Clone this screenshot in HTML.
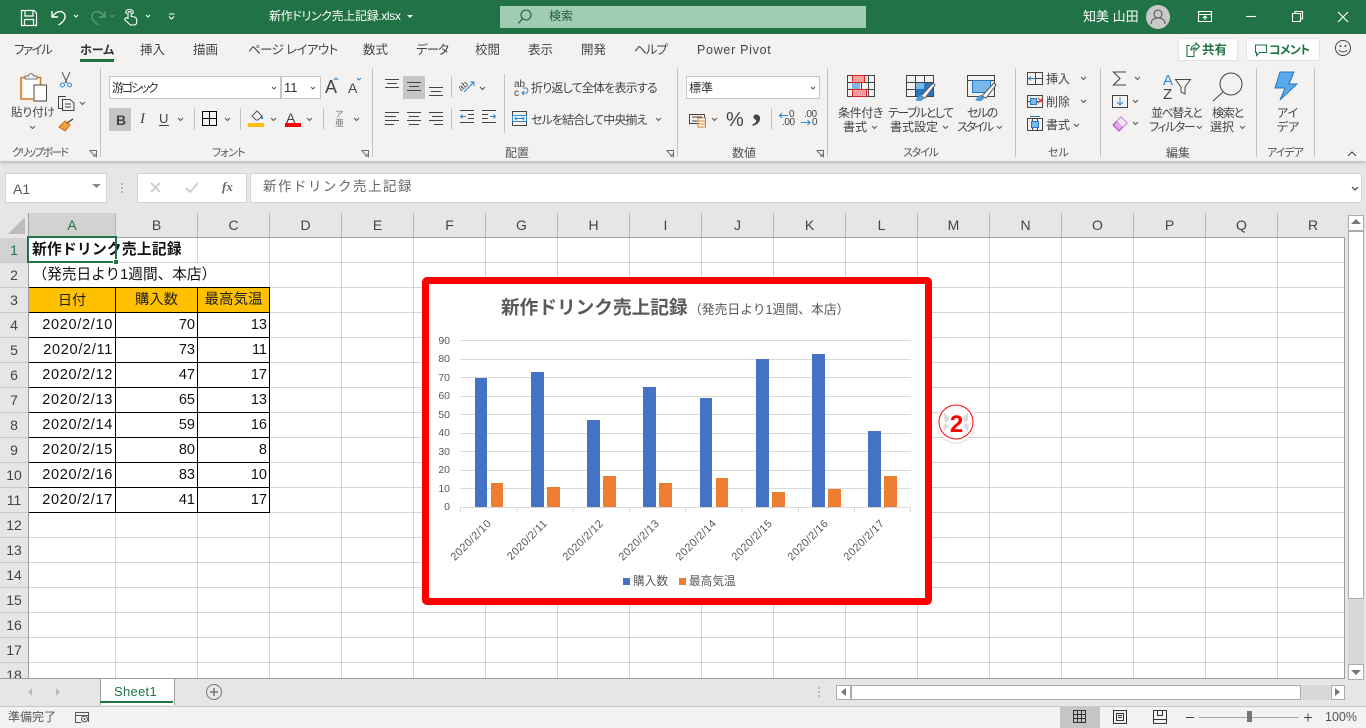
<!DOCTYPE html>
<html lang="ja"><head><meta charset="utf-8"><title>Excel</title>
<style>
html,body{margin:0;padding:0;width:1366px;height:728px;overflow:hidden;background:#e6e6e6}
body{position:relative;font-family:"Liberation Sans","Noto Sans CJK JP",sans-serif;color:#333}
.t{position:absolute;white-space:nowrap;line-height:1;margin-top:1px}
.b{position:absolute}
.p,.r,.g,.tab{font-feature-settings:"palt"}
.r{font-size:12px;color:#444}
.g{font-size:11px;color:#555}
.tab{font-size:12.5px;top:43px;color:#444}
.hd{position:absolute;top:213px;height:24px;line-height:25px;text-align:center;font-size:14px;color:#444}
.rh{position:absolute;left:0;width:28px;height:25px;line-height:26px;text-align:center;font-size:14px;color:#444}
.c{position:absolute;height:25px;line-height:26px;font-size:14.5px;color:#111;white-space:nowrap}
.j{font-size:14.67px;letter-spacing:.33px}
.n{text-align:right}
svg{position:absolute;left:0;top:0;overflow:visible}
</style></head><body>
<!-- title bar -->
<div class="b" style="left:0;top:0;width:1366px;height:34px;background:#217346"></div>
<div class="b" style="left:500px;top:6px;width:366px;height:22px;background:#a0ccb4"></div>
<div class="t p" style="left:269px;top:9px;font-size:12px;color:#fff;letter-spacing:-.35px">新作ドリンク売上記録.xlsx</div>
<div class="t" style="left:549px;top:9px;font-size:12px;color:#1d5c3b">検索</div>
<div class="t" style="left:1083px;top:9px;font-size:13px;color:#fff">知美 山田</div>
<!-- ribbon -->
<div class="b" style="left:0;top:34px;width:1366px;height:127px;background:#f3f2f1;box-shadow:0 2px 3px rgba(0,0,0,.18)"></div>
<div class="t tab" style="left:14px;letter-spacing:-1.5px">ファイル</div>
<div class="t tab" style="left:80px;font-weight:700;color:#333;font-size:12px">ホーム</div>
<div class="b" style="left:80px;top:59px;width:34px;height:3px;background:#217346"></div>
<div class="t tab" style="left:140px">挿入</div>
<div class="t tab" style="left:193px">描画</div>
<div class="t tab" style="left:248px;letter-spacing:-.6px">ページ レイアウト</div>
<div class="t tab" style="left:363px">数式</div>
<div class="t tab" style="left:416px;letter-spacing:-1px">データ</div>
<div class="t tab" style="left:475px">校閲</div>
<div class="t tab" style="left:528px">表示</div>
<div class="t tab" style="left:581px">開発</div>
<div class="t tab" style="left:634px;letter-spacing:-1px">ヘルプ</div>
<div class="t tab" style="left:697px;letter-spacing:.7px;font-size:12.5px">Power Pivot</div>
<!-- share/comment -->
<div class="b" style="left:1178px;top:38px;width:58px;height:21px;background:#fff;border:1px solid #e3e3e3;border-radius:2px"></div>
<div class="b" style="left:1246px;top:38px;width:72px;height:21px;background:#fff;border:1px solid #e3e3e3;border-radius:2px"></div>
<div class="t" style="left:1202px;top:43px;font-size:12.5px;font-weight:700;color:#217346">共有</div>
<div class="t p" style="left:1269px;top:43px;font-size:12px;font-weight:700;color:#217346;letter-spacing:-.8px">コメント</div>
<!-- font boxes -->
<div class="b" style="left:109px;top:76px;width:170px;height:21px;background:#fff;border:1px solid #c6c6c6"></div>
<div class="b" style="left:281px;top:76px;width:38px;height:21px;background:#fff;border:1px solid #c6c6c6"></div>
<div class="b" style="left:686px;top:76px;width:132px;height:21px;background:#fff;border:1px solid #c6c6c6"></div>
<div class="b" style="left:109px;top:108px;width:22px;height:23px;background:#c6c5c4"></div>
<div class="b" style="left:403px;top:76px;width:22px;height:23px;background:#c6c5c4"></div>
<div class="t p" style="left:112px;top:81px;font-size:12px;color:#333;letter-spacing:-2px">游ゴシック</div>
<div class="t" style="left:284px;top:80px;font-size:13px;color:#333">11</div>
<div class="t" style="left:689px;top:81px;font-size:12px;color:#333">標準</div>
<div class="t" style="left:116px;top:112px;font-size:14px;font-weight:700;color:#444">B</div>
<div class="t" style="left:140px;top:111px;font-size:15px;font-style:italic;font-family:'Liberation Serif',serif;color:#444">I</div>
<div class="t" style="left:159px;top:111px;font-size:13px;color:#444">U</div>
<div class="t" style="left:325px;top:77px;font-size:18px;color:#444">A</div>
<div class="t" style="left:348px;top:80px;font-size:14px;color:#444">A</div>
<div class="t" style="left:286px;top:110px;font-size:14px;color:#444">A</div>
<div class="t" style="left:335px;top:109px;font-size:8.5px;color:#777">ア</div>
<div class="t" style="left:335px;top:118px;font-size:9px;color:#777">亜</div>
<div class="t r" style="left:11px;top:107px;font-size:11.5px">貼り付け</div>
<div class="t r" style="left:531px;top:81px;font-size:12px;letter-spacing:-.8px">折り返して全体を表示する</div>
<div class="t r" style="left:531px;top:113px;font-size:12px;letter-spacing:-.9px">セルを結合して中央揃え</div>
<div class="t" style="left:726px;top:109px;font-size:20px;color:#444">%</div>
<div class="t" style="left:752px;top:88px;font-size:38px;font-weight:700;font-family:'Liberation Serif',serif;color:#444">,</div>
<div class="t" style="left:789px;top:109px;font-size:10px;color:#444">0</div>
<div class="t" style="left:782px;top:117px;font-size:10px;color:#444;letter-spacing:-.4px">.00</div>
<div class="t" style="left:804px;top:109px;font-size:10px;color:#444;letter-spacing:-.4px">.00</div>
<div class="t" style="left:812px;top:117px;font-size:10px;color:#444">0</div>
<div class="t r" style="left:838px;top:106px;letter-spacing:-.4px">条件付き</div>
<div class="t r" style="left:843px;top:120px">書式</div>
<div class="t r" style="left:888px;top:106px;letter-spacing:-1.5px">テーブルとして</div>
<div class="t r" style="left:890px;top:120px">書式設定</div>
<div class="t r" style="left:967px;top:106px;letter-spacing:-1.5px">セルの</div>
<div class="t r" style="left:957px;top:120px;letter-spacing:-2px">スタイル</div>
<div class="t r" style="left:1046px;top:72px">挿入</div>
<div class="t r" style="left:1046px;top:95px">削除</div>
<div class="t r" style="left:1046px;top:118px">書式</div>
<div class="t r" style="left:1151px;top:106px;letter-spacing:-1.5px">並べ替えと</div>
<div class="t r" style="left:1149px;top:120px;letter-spacing:-1.5px">フィルター</div>
<div class="t r" style="left:1212px;top:106px;letter-spacing:-1.2px">検索と</div>
<div class="t r" style="left:1210px;top:120px">選択</div>
<div class="t r" style="left:1277px;top:106px">アイ</div>
<div class="t r" style="left:1277px;top:120px">デア</div>
<div class="t g" style="left:12px;top:147px;letter-spacing:-1.8px">クリップボード</div>
<div class="t g" style="left:212px;top:147px;letter-spacing:-.8px">フォント</div>
<div class="t g" style="left:505px;top:146px;font-size:12px">配置</div>
<div class="t g" style="left:732px;top:146px;font-size:12px">数値</div>
<div class="t g" style="left:903px;top:147px;letter-spacing:-1.2px">スタイル</div>
<div class="t g" style="left:1048px;top:147px">セル</div>
<div class="t g" style="left:1166px;top:146px;font-size:12px">編集</div>
<div class="t g" style="left:1267px;top:147px;letter-spacing:-1px">アイデア</div>
<!-- formula bar -->
<div class="b" style="left:5px;top:173px;width:100px;height:28px;background:#fff;border:1px solid #d4d4d4"></div>
<div class="b" style="left:137px;top:173px;width:108px;height:28px;background:#fff;border:1px solid #d4d4d4"></div>
<div class="b" style="left:250px;top:173px;width:1110px;height:28px;background:#fff;border:1px solid #d4d4d4"></div>
<div class="t" style="left:13px;top:181px;font-size:14px;color:#555">A1</div>
<div class="t" style="left:222px;top:179px;font-size:13px;font-style:italic;font-weight:700;font-family:'Liberation Serif',serif;color:#666">fx</div>
<div class="t" style="left:263px;top:179px;font-size:13.5px;letter-spacing:1.5px;color:#666">新作ドリンク売上記録</div>
<!-- sheet -->
<div class="b" style="left:28px;top:237px;width:1316px;height:441px;background:#fff"></div>
<div class="b" style="left:28px;top:213px;width:87px;height:24px;background:#d2d2d2"></div>
<div class="b" style="left:0;top:238px;width:28px;height:24px;background:#d2d2d2"></div>
<div class="b" style="left:29px;top:288px;width:241px;height:24px;background:#ffc000"></div>
<svg width="1366" height="728" style="left:0;top:0">
<path fill="none" stroke="#d4d4d4" stroke-width="1" d="M115.5 237V678M197.5 237V678M269.5 237V678M341.5 237V678M413.5 237V678M485.5 237V678M557.5 237V678M629.5 237V678M701.5 237V678M773.5 237V678M845.5 237V678M917.5 237V678M989.5 237V678M1061.5 237V678M1133.5 237V678M1205.5 237V678M1277.5 237V678
M28 262.5H1344M28 287.5H1344M28 312.5H1344M28 337.5H1344M28 362.5H1344M28 387.5H1344M28 412.5H1344M28 437.5H1344M28 462.5H1344M28 487.5H1344M28 512.5H1344M28 537.5H1344M28 562.5H1344M28 587.5H1344M28 612.5H1344M28 637.5H1344M28 662.5H1344"/>
<path fill="none" stroke="#fff" stroke-width="1" d="M115.5 263V287M197.5 263V287"/>
<path fill="none" stroke="#b4b4b4" stroke-width="1" d="M115.5 213V237M197.5 213V237M269.5 213V237M341.5 213V237M413.5 213V237M485.5 213V237M557.5 213V237M629.5 213V237M701.5 213V237M773.5 213V237M845.5 213V237M917.5 213V237M989.5 213V237M1061.5 213V237M1133.5 213V237M1205.5 213V237M1277.5 213V237"/>
<path fill="none" stroke="#9e9e9e" stroke-width="1" d="M28.5 213V678M28 237.5H1344M1344.5 237V678"/>
<path fill="none" stroke="#c8c8c8" stroke-width="1" d="M0 262.5H28M0 287.5H28M0 312.5H28M0 337.5H28M0 362.5H28M0 387.5H28M0 412.5H28M0 437.5H28M0 462.5H28M0 487.5H28M0 512.5H28M0 537.5H28M0 562.5H28M0 587.5H28M0 612.5H28M0 637.5H28M0 662.5H28"/>
<path fill="#bdbdbd" d="M8 234L25 217V234Z"/>
<path fill="none" stroke="#000" stroke-width="1" d="M29 287.5H270M29 312.5H270M29 337.5H270M29 362.5H270M29 387.5H270M29 412.5H270M29 437.5H270M29 462.5H270M29 487.5H270M29 512.5H270M115.5 287V513M197.5 287V513M269.5 287V513"/>
</svg>
<div class="hd" style="left:29px;width:86px;color:#217346">A</div>
<div class="hd" style="left:116px;width:81px">B</div>
<div class="hd" style="left:198px;width:71px">C</div>
<div class="hd" style="left:270px;width:71px">D</div>
<div class="hd" style="left:342px;width:71px">E</div>
<div class="hd" style="left:414px;width:71px">F</div>
<div class="hd" style="left:486px;width:71px">G</div>
<div class="hd" style="left:558px;width:71px">H</div>
<div class="hd" style="left:630px;width:71px">I</div>
<div class="hd" style="left:702px;width:71px">J</div>
<div class="hd" style="left:774px;width:71px">K</div>
<div class="hd" style="left:846px;width:71px">L</div>
<div class="hd" style="left:918px;width:71px">M</div>
<div class="hd" style="left:990px;width:71px">N</div>
<div class="hd" style="left:1062px;width:71px">O</div>
<div class="hd" style="left:1134px;width:71px">P</div>
<div class="hd" style="left:1206px;width:71px">Q</div>
<div class="hd" style="left:1278px;width:70px">R</div>
<div class="rh" style="top:237px;color:#217346">1</div><div class="rh" style="top:262px">2</div><div class="rh" style="top:287px">3</div><div class="rh" style="top:312px">4</div><div class="rh" style="top:337px">5</div><div class="rh" style="top:362px">6</div><div class="rh" style="top:387px">7</div><div class="rh" style="top:412px">8</div><div class="rh" style="top:437px">9</div><div class="rh" style="top:462px">10</div><div class="rh" style="top:487px">11</div><div class="rh" style="top:512px">12</div><div class="rh" style="top:537px">13</div><div class="rh" style="top:562px">14</div><div class="rh" style="top:587px">15</div><div class="rh" style="top:612px">16</div><div class="rh" style="top:637px">17</div><div class="rh" style="top:662px;height:16px;overflow:hidden">18</div>
<!-- cells -->
<div class="c j" style="left:32px;top:237px;font-weight:700">新作ドリンク売上記録</div>
<div class="c j" style="left:32.500px;top:262px;letter-spacing:0">（発売日より1週間、本店）</div>
<div class="c" style="left:29px;top:287px;width:86px;text-align:center;color:#222;font-size:14px">日付</div>
<div class="c" style="left:116px;top:287px;width:81px;text-align:center;color:#222;font-size:14.3px">購入数</div>
<div class="c" style="left:198px;top:287px;width:71px;text-align:center;color:#222;font-size:14.5px">最高気温</div>
<div class="c n" style="left:29px;top:312px;width:84px;letter-spacing:.7px">2020/2/10</div><div class="c n" style="left:116px;top:312px;width:79px">70</div><div class="c n" style="left:198px;top:312px;width:69px">13</div>
<div class="c n" style="left:29px;top:337px;width:84px;letter-spacing:.7px">2020/2/11</div><div class="c n" style="left:116px;top:337px;width:79px">73</div><div class="c n" style="left:198px;top:337px;width:69px">11</div>
<div class="c n" style="left:29px;top:362px;width:84px;letter-spacing:.7px">2020/2/12</div><div class="c n" style="left:116px;top:362px;width:79px">47</div><div class="c n" style="left:198px;top:362px;width:69px">17</div>
<div class="c n" style="left:29px;top:387px;width:84px;letter-spacing:.7px">2020/2/13</div><div class="c n" style="left:116px;top:387px;width:79px">65</div><div class="c n" style="left:198px;top:387px;width:69px">13</div>
<div class="c n" style="left:29px;top:412px;width:84px;letter-spacing:.7px">2020/2/14</div><div class="c n" style="left:116px;top:412px;width:79px">59</div><div class="c n" style="left:198px;top:412px;width:69px">16</div>
<div class="c n" style="left:29px;top:437px;width:84px;letter-spacing:.7px">2020/2/15</div><div class="c n" style="left:116px;top:437px;width:79px">80</div><div class="c n" style="left:198px;top:437px;width:69px">8</div>
<div class="c n" style="left:29px;top:462px;width:84px;letter-spacing:.7px">2020/2/16</div><div class="c n" style="left:116px;top:462px;width:79px">83</div><div class="c n" style="left:198px;top:462px;width:69px">10</div>
<div class="c n" style="left:29px;top:487px;width:84px;letter-spacing:.7px">2020/2/17</div><div class="c n" style="left:116px;top:487px;width:79px">41</div><div class="c n" style="left:198px;top:487px;width:69px">17</div>
<!-- selection -->
<div class="b" style="left:27px;top:236px;border:2px solid #217346;width:86px;height:23px"></div>
<div class="b" style="left:113px;top:259px;width:4px;height:4px;background:#217346;border:1px solid #fff"></div>
<!-- chart -->
<div class="b" style="left:422px;top:277px;width:496px;height:314px;border:7px solid #f00;border-radius:5px;background:#fff"></div>
<div class="t" style="left:501px;top:298px;font-size:18.67px;font-weight:700;color:#595959">新作ドリンク売上記録</div>
<div class="t" style="left:689px;top:303px;font-size:12.8px;color:#595959">（発売日より1週間、本店）</div>
<svg width="1366" height="728">
<path fill="none" stroke="#d9d9d9" d="M460 340.5H911M460 359.5H911M460 377.5H911M460 396.5H911M460 414.5H911M460 433.5H911M460 451.5H911M460 470.5H911M460 488.5H911M460 507.5H911M460.5 507V512M517 507V512M573 507V512M629.5 507V512M685.5 507V512M742 507V512M798.5 507V512M854.5 507V512M910.5 507V512"/>
<g fill="#4472c4"><rect x="475" y="378" width="12" height="129"/><rect x="531" y="372" width="13" height="135"/><rect x="587" y="420" width="13" height="87"/><rect x="643" y="387" width="13" height="120"/><rect x="700" y="398" width="12" height="109"/><rect x="756" y="359" width="13" height="148"/><rect x="812" y="354" width="13" height="153"/><rect x="868" y="431" width="13" height="76"/><rect x="623" y="578" width="7" height="7"/></g>
<g fill="#ed7d31"><rect x="491" y="483" width="12" height="24"/><rect x="547" y="487" width="13" height="20"/><rect x="603" y="476" width="13" height="31"/><rect x="659" y="483" width="13" height="24"/><rect x="716" y="478" width="12" height="29"/><rect x="772" y="492" width="13" height="15"/><rect x="828" y="489" width="13" height="18"/><rect x="884" y="476" width="13" height="31"/><rect x="679" y="578" width="7" height="7"/></g>
<g font-family="Liberation Sans,sans-serif" font-size="10.5" fill="#595959" text-anchor="end">
<text x="450" y="344">90</text><text x="450" y="362">80</text><text x="450" y="381">70</text><text x="450" y="399">60</text><text x="450" y="418">50</text><text x="450" y="436">40</text><text x="450" y="455">30</text><text x="450" y="473">20</text><text x="450" y="492">10</text><text x="450" y="510">0</text>
<g font-size="11" letter-spacing=".4">
<text transform="translate(492 524) rotate(-45)">2020/2/10</text><text transform="translate(548 524) rotate(-45)">2020/2/11</text><text transform="translate(604 524) rotate(-45)">2020/2/12</text><text transform="translate(660 524) rotate(-45)">2020/2/13</text><text transform="translate(717 524) rotate(-45)">2020/2/14</text><text transform="translate(773 524) rotate(-45)">2020/2/15</text><text transform="translate(829 524) rotate(-45)">2020/2/16</text><text transform="translate(885 524) rotate(-45)">2020/2/17</text>
</g></g>
<g font-family="Liberation Sans,Noto Sans CJK JP,sans-serif" font-size="11.67" fill="#595959"><text x="633" y="585">購入数</text><text x="689" y="585">最高気温</text></g>
<!-- badge -->
<circle cx="956" cy="424" r="20" fill="#000" opacity=".08"/>
<circle cx="956" cy="422.500" r="19.500" fill="#fff"/>
<circle cx="956" cy="422" r="17" fill="none" stroke="#f00" stroke-width="1"/>
<path fill="#dcdcdc" d="M944 413l6 5-3 5-3-3zM968 413l-6 5 3 5 3-3zM944 431l5-5-3-3-3 3zM968 431l-5-5 3-3 3 3z"/>
<text x="956.500" y="432" text-anchor="middle" font-family="Liberation Sans,sans-serif" font-weight="700" font-size="24" fill="#f00">2</text>
</svg>
<!-- vertical scrollbar -->
<div class="b" style="left:1345px;top:213px;width:21px;height:493px;background:#e6e6e6"></div>
<div class="b" style="left:1348px;top:231px;width:16px;height:449px;background:#d8d8d8"></div>
<div class="b" style="left:1348px;top:231px;width:14px;height:366px;background:#fff;border:1px solid #ababab"></div>
<div class="b" style="left:1348px;top:215px;width:14px;height:14px;background:#fff;border:1px solid #ababab"></div>
<div class="b" style="left:1348px;top:664px;width:14px;height:14px;background:#fff;border:1px solid #ababab"></div>
<!-- tab bar -->
<div class="b" style="left:0;top:678px;width:1345px;height:28px;background:#e6e6e6;border-top:1px solid #9e9e9e;box-sizing:border-box"></div>
<div class="b" style="left:0;top:706px;width:1366px;height:1px;background:#c8c8c8"></div>
<div class="b" style="left:100px;top:678px;width:73px;height:26px;background:#fff;border:1px solid #9e9e9e;border-bottom:0"></div>
<div class="b" style="left:100px;top:701px;width:73px;height:2px;background:#217346"></div>
<div class="t" style="left:114px;top:684px;font-size:13px;color:#217346;letter-spacing:.3px">Sheet1</div>
<!-- hscroll -->
<div class="b" style="left:836px;top:685px;width:509px;height:15px;background:#d8d8d8"></div>
<div class="b" style="left:836px;top:685px;width:13px;height:13px;background:#fff;border:1px solid #ababab"></div>
<div class="b" style="left:851px;top:685px;width:448px;height:13px;background:#fff;border:1px solid #ababab"></div>
<div class="b" style="left:1331px;top:685px;width:12px;height:13px;background:#fff;border:1px solid #ababab"></div>
<!-- status bar -->
<div class="b" style="left:0;top:707px;width:1366px;height:21px;background:#f3f2f1"></div>
<div class="b" style="left:1060px;top:707px;width:40px;height:21px;background:#c6c5c4"></div>
<div class="t" style="left:8px;top:710px;font-size:12px;color:#555">準備完了</div>
<div class="t" style="left:1325px;top:710px;font-size:12.5px;color:#555">100%</div>
<svg width="1366" height="728">
<!-- QAT -->
<g fill="none" stroke="#fff" stroke-width="1.2">
<path d="M21.5 10.5H34L36.5 13V25.5H21.5ZM25 10.5V16H33V10.5M24.5 25.5V19.5H33.5V25.5"/>
<path d="M52 11V17H58M52.5 16.5C56 11 62 10 64.5 14C66.5 17.5 63.5 22 58.5 25" stroke-width="1.4"/>
<path d="M128 19V13a1.6 1.6 0 0 1 3.2 0V16.500c3 0 5.500 .5 5.500 3.500V22c0 2-1 3-3 3H130.500L125 20c-1-1.500 1.500-3 3-1.500M126.500 14c-1.500-2-.5-4.500 3-4.500s4.500 2.500 3 4.500" stroke-width="1.100"/>
<path d="M74 15l2 2 2-2M146 15l2 2 2-2M169 14h5.5M169 16.5l2.5 2.5 2.500-2.500" stroke-width="1"/>
</g>
<g fill="none" stroke="#5f9b7b" stroke-width="1.4"><path d="M105 11V17H99M104.5 16.5C101 11 95 10 92.5 14C90.5 17.5 93.5 22 98.5 25"/><path d="M110 15l2 2 2-2" stroke-width="1"/></g>
<path fill="#fff" d="M407 15h6l-3 3z"/>
<!-- search icon -->
<g fill="none" stroke="#1d5c3b" stroke-width="1.1"><circle cx="526" cy="15" r="5"/><path d="M522 19l-3.500 4.500"/></g>
<!-- avatar -->
<circle cx="1158" cy="17" r="12" fill="#c9c9c9"/><g fill="none" stroke="#555" stroke-width="1.1"><circle cx="1158" cy="14" r="4"/><path d="M1151 24c0-4 3-6 7-6s7 2 7 6"/></g>
<!-- window -->
<g fill="none" stroke="#fff" stroke-width="1.1"><path d="M1198.500 11.500H1211.500V21.500H1198.500ZM1198.500 14.500H1211.500M1205 20V16M1203 18l2-2 2 2"/><path d="M1246 16.500H1256"/><path d="M1292.500 13.500H1300.500V21.500H1292.500ZM1295 13V11.500H1302.500V19H1301"/><path d="M1338 12l10 10M1348 12l-10 10"/></g>
<!-- share comment smile -->
<g fill="none" stroke="#217346" stroke-width="1.1"><path d="M1194 47v9.500h-7v-11h3M1191 50c0-3 2-5 5-5V43l3.500 3.500-3.500 3.500v-2c-2 0-3.500 1-5 2Z"/><path d="M1255.500 45H1266.500V52.500H1259.500L1256.500 55.500V52.500H1255.500Z"/></g>
<g fill="none" stroke="#444"><circle cx="1343" cy="48" r="7.500"/><path d="M1339 50c2 2.500 6 2.500 8 0"/></g><circle cx="1340.500" cy="46" r="1" fill="#444"/><circle cx="1345.500" cy="46" r="1" fill="#444"/>
<!-- separators -->
<path stroke="#c4c4c4" fill="none" d="M100.500 68V157M372.500 68V157M677.500 68V157M827.500 68V157M1015.500 68V157M1100.500 68V157M1256.500 68V157M1314.500 68V157M194.500 108V130M240.500 108V130M323.500 108V130M504.500 74V133M451.500 76V98M451.500 108V130M771.500 108V130"/>
<!-- dialog launchers -->
<g fill="none" stroke="#666" stroke-width=".9"><path d="M89.500 150.500H96.500V157.500M90 151l5 5M93 156h3V153M361.500 150.500H368.500V157.500M362 151l5 5M365 156h3V153M666.500 150.500H673.500V157.500M667 151l5 5M670 156h3V153M816.500 150.500H823.500V157.500M817 151l5 5M820 156h3V153"/></g>
<!-- paste -->
<path fill="#fff" d="M24 78h16v20H24z"/>
<path fill="none" stroke="#d87a1b" stroke-width="1.6" d="M21 77.500H40.500V98M21 77.500V99H33"/>
<path fill="#f3f2f1" stroke="#777" d="M25 79v-3h3.500c0-3 5-3 5 0H37v3Z"/>
<path fill="#fff" stroke="#444" d="M34 85H46.500V101H34Z"/>
<!-- cut copy painter -->
<g fill="none" stroke="#555"><path d="M62 72l5 11M70 72l-5 11"/></g><g fill="none" stroke="#2f88d0"><circle cx="62.500" cy="85" r="2"/><circle cx="69.500" cy="85" r="2"/></g>
<g fill="none" stroke="#444"><path d="M63 108.500H58.500V96.500H66M62.500 99.500H70L74 103V110.500H62.500ZM65 104H71M65 107H71"/></g>
<path fill="#f0a040" stroke="#c87018" d="M59 127l6-6 5 4-5 6Z"/><path fill="none" stroke="#555" stroke-width="1.4" d="M67 123l6-4"/>
<!-- chevrons -->
<g fill="none" stroke="#555" stroke-width="1"><path d="M80 102l2.500 2.500L85 102M30 126l2.500 2.500L35 126M272 87l2 2 2-2M311 87l2 2 2-2M178 118l2.500 2.500L183 118M225 118l2.500 2.500L230 118M271 118l2.500 2.500L276 118M307 118l2.500 2.500L312 118M354 118l2.500 2.500L359 118M480 87l2.500 2.500L485 87M656 118l2.500 2.500L661 118M811 87l2 2 2-2M712 118l2.500 2.500L717 118M872 126l2.500 2.500L877 126M943 126l2.500 2.500L948 126M997 126l2.500 2.500L1002 126M1081 77l2.500 2.500L1086 77M1081 100l2.500 2.500L1086 100M1074 124l2.500 2.500L1079 124M1135 77l2.500 2.500L1140 77M1133 100l2.500 2.500L1138 100M1133 122l2.500 2.500L1138 122M1197 126l2.500 2.500L1202 126M1240 126l2.500 2.500L1245 126"/></g>
<path fill="none" stroke="#444" d="M1348 156l4-4 4 4"/><path fill="none" stroke="#2f88d0" d="M334 80l2-2 2 2M357 78l2 2 2-2"/>
<!-- underline, borders, fill colour -->
<path stroke="#444" d="M159 125.500H169"/>
<path fill="none" stroke="#000" d="M202.500 111.500H216.500V125.500H202.500ZM209.500 111.500V125.500M202.500 118.500H216.500"/>
<path fill="#ffc000" d="M248 123h16v4H248z"/><path fill="#f00" d="M285 123h16v4H285z"/>
<path fill="none" stroke="#555" d="M252 116l5-5 5 5-4 4h-2Z"/><path fill="#2f88d0" d="M261 115l2 1v3h-2z"/>
<!-- alignment -->
<g fill="none" stroke="#444"><path d="M385 79.500H399M387 83.500H397M385 87.500H399"/><path d="M407 82.500H421M409 86.500H419M407 90.500H421"/><path d="M429 87.500H443M431 91.500H441M429 95.500H443"/>
<path d="M385 112.500H399M385 116.500H396M385 120.500H399M385 124.500H394M407 112.500H421M409 116.500H419M407 120.500H421M409 124.500H419M429 112.500H443M432 116.500H443M429 120.500H443M434 124.500H443"/>
<path d="M460 110.500H474M468 114.500H474M468 118.500H474M460 122.500H474M482 110.500H496M482 114.500H488M482 118.500H488M482 122.500H496"/></g>
<g fill="none" stroke="#2f88d0"><path d="M466 116.500H460.500M462.500 114.500L460.500 116.500L462.500 118.500M490 116.500H495.500M493.500 114.500L495.500 116.500L493.500 118.500"/><path d="M464 92l10-10M470 82h4v4"/></g>
<text x="459" y="90" font-size="9" fill="#444" transform="rotate(-40 462 88)" font-family="Liberation Sans,sans-serif">ab</text>
<!-- wrap, merge -->
<text x="514" y="87" font-size="10" fill="#444" font-family="Liberation Sans,sans-serif">ab</text><text x="514" y="96" font-size="10" fill="#444" font-family="Liberation Sans,sans-serif">c</text>
<path fill="none" stroke="#2f88d0" d="M522 93H526c2.500 0 2.500-5 0-5H523M524 91l-2 2 2 2"/>
<path fill="none" stroke="#444" d="M512.500 111.500H526.500V125.500H512.500ZM512.500 115.500H526.500M512.500 121.500H526.500"/><path fill="none" stroke="#2f88d0" d="M512.500 115.500H526.500V121.500H512.500ZM515 118.500H524M516.500 117l-1.500 1.500 1.500 1.500M522.500 117l1.500 1.500-1.500 1.500"/>
<!-- number -->
<path fill="none" stroke="#444" d="M689.500 114.500H704.500V123.500H689.500ZM692 117H702M692 121H697"/><path fill="#fff" stroke="#d87a1b" d="M698 118H705.500V127H698ZM698 121H705.500M698 124H705.500"/>
<path fill="none" stroke="#2f88d0" d="M788 115.500H779.500M782 113l-2.500 2.500 2.500 2.500M801 122.500H810M807.500 120l2.500 2.500-2.500 2.500"/>
<!-- conditional format -->
<g fill="none" stroke="#444"><path d="M847.500 75.500H874.500V96.500H847.500ZM854.500 75.500V96.500M861.500 75.500V96.500M868.500 75.500V96.500M847.500 82.500H874.500M847.500 89.500H874.500"/></g>
<path fill="#f7a0a4" stroke="#d22" d="M852.500 75.500H864.500V82.500H852.500ZM852.500 89.500H866.500V96.500H852.500Z"/><path fill="#7ab8e8" d="M852 83h8v6h-8z"/>
<!-- table format -->
<g fill="none" stroke="#444"><path d="M906.500 75.500H933.500V96.500H906.500ZM906.500 82.500H933.500M906.500 89.500H933.500M915.500 75.500V96.500M924.500 75.500V96.500"/></g><path fill="#2878c0" d="M916 83h17v13h-17z"/><path fill="#7ab8e8" d="M916 83h8v6h-8z"/>
<path fill="#fff" stroke="#555" d="M921 96l12-13 2 2-10 13Z"/><path fill="#4c9ad8" d="M915 100c2-1 3-5 6-5l3 3c-1 3-5 4-9 2Z"/>
<g fill="none" stroke="#444"><path d="M967.500 75.500H994.500V96.500H967.500ZM967.500 80.500H994.500"/></g><path fill="#7ab8e8" stroke="#2878c0" d="M972.500 80.500H990.500V92.500H972.500Z"/>
<path fill="#fff" stroke="#555" d="M982 96l12-13 2 2-10 13Z"/><path fill="#4c9ad8" d="M975 100c2-1 3-5 6-5l3 3c-1 3-5 4-9 2Z"/>
<!-- cells icons -->
<g fill="none" stroke="#444"><path d="M1027.500 72.500H1042.500V84.500H1027.500ZM1035.500 72.500V84.500M1027.500 78.500H1042.500"/><path d="M1027.500 95.500H1042.500V107.500H1027.500ZM1027.500 101.500H1042.500"/><path d="M1027.500 118.500H1042.500V130.500H1027.500ZM1032.500 118.500V130.500M1037.500 118.500V130.500"/></g>
<path fill="#f3f2f1" stroke="#2f88d0" d="M1035 78.500H1029M1031 76.500l-2 2 2 2"/><path fill="#7ab8e8" stroke="#2878c0" d="M1030.500 98.500H1036.500V104.500H1030.500Z"/><path stroke="#e84040" stroke-width="1.300" d="M1038 98l5 5M1043 98l-5 5"/><path fill="#7ab8e8" stroke="#2878c0" d="M1031.500 121.500H1038.500V127.500H1031.500ZM1030 116.500H1040"/>
<!-- editing -->
<path fill="none" stroke="#444" stroke-width="1.100" d="M1126 72H1113.500L1120 78.500L1113.500 85H1126"/>
<path fill="none" stroke="#444" d="M1112.500 95.500H1127.500V107.500H1112.500Z"/><path fill="none" stroke="#2f88d0" d="M1120 97V105M1117 102l3 3 3-3"/>
<path fill="#d9a8e0" stroke="#a64dbc" d="M1113 125l8-8 6 6-8 8Z"/><path fill="#fff" d="M1117 121l4-4 6 6-4 4Z" opacity=".7"/>
<text x="1163" y="85" font-size="15" fill="#2f88d0" font-family="Liberation Sans,sans-serif">A</text><text x="1163" y="99" font-size="15" fill="#444" font-family="Liberation Sans,sans-serif">Z</text>
<path fill="none" stroke="#444" d="M1175.500 79.500H1190.500L1185 87V94L1181 92V87Z"/>
<g fill="none" stroke="#444"><circle cx="1231" cy="84" r="11"/><path d="M1223 92L1213 101"/></g>
<!-- ideas -->
<path fill="#5aa9ea" stroke="#2878c0" d="M1280 72H1294L1289 84H1297L1280 100L1285 88H1275Z"/>
<!-- name box etc -->
<path fill="#888" d="M92 184h9l-4.500 4z"/>
<path fill="#b8b8b8" d="M121 183h2v2h-2zM121 187h2v2h-2zM121 191h2v2h-2z"/>
<g fill="none" stroke="#c8c8c8" stroke-width="1.600"><path d="M151 183l9 9M160 183l-9 9M186 188l4 4 8-9"/></g>
<path fill="none" stroke="#555" d="M1352 187l3 3 3-3" stroke-width="1.300"/>
<!-- scroll arrows -->
<path fill="#777" d="M1351 224l5-5 5 5zM1351 670l5 5 5-5zM846 688l-5 4 5 4zM1335 688l5 4-5 4z"/>
<path fill="#bdbdbd" d="M32 688l-4 4 4 4zM56 688l4 4-4 4zM818 687h2v2h-2zM818 691h2v2h-2zM818 695h2v2h-2z"/>
<!-- new sheet -->
<g fill="none" stroke="#777"><circle cx="214" cy="692" r="7.500"/></g><path stroke="#777" stroke-width="1.500" d="M210 692h8M214 688v8"/>
<!-- macro icon -->
<g fill="none" stroke="#555"><path d="M75.500 712.500H88.500V722M75.500 712.500V722.500H81M75.500 715.500H88.500"/><circle cx="84.500" cy="719" r="3"/></g><circle cx="84.500" cy="719" r="1" fill="#555"/>
<!-- view icons -->
<g fill="none" stroke="#333"><path d="M1073.500 710.500H1085.500V722.500H1073.500ZM1077.500 710.500V722.500M1081.500 710.500V722.500M1073.500 714.500H1085.500M1073.500 718.500H1085.500"/><path d="M1113.500 710.500H1126.500V723.500H1113.500ZM1116.500 713.500H1123.500V720.500H1116.500ZM1118 715.500H1122M1118 717.500H1122"/><path d="M1153.500 710.500H1166.500V723.500H1153.500ZM1153.500 719.500H1166.500M1157.500 710.500V715.500H1162.500V710.500"/></g>
<!-- zoom -->
<path stroke="#444" d="M1186 717.500H1194M1304 717.500H1312M1308 713.500V721.500"/><path stroke="#aaa" d="M1199 717.500H1299"/><rect x="1247" y="711" width="5" height="11" fill="#777"/>
</svg>
</body></html>
